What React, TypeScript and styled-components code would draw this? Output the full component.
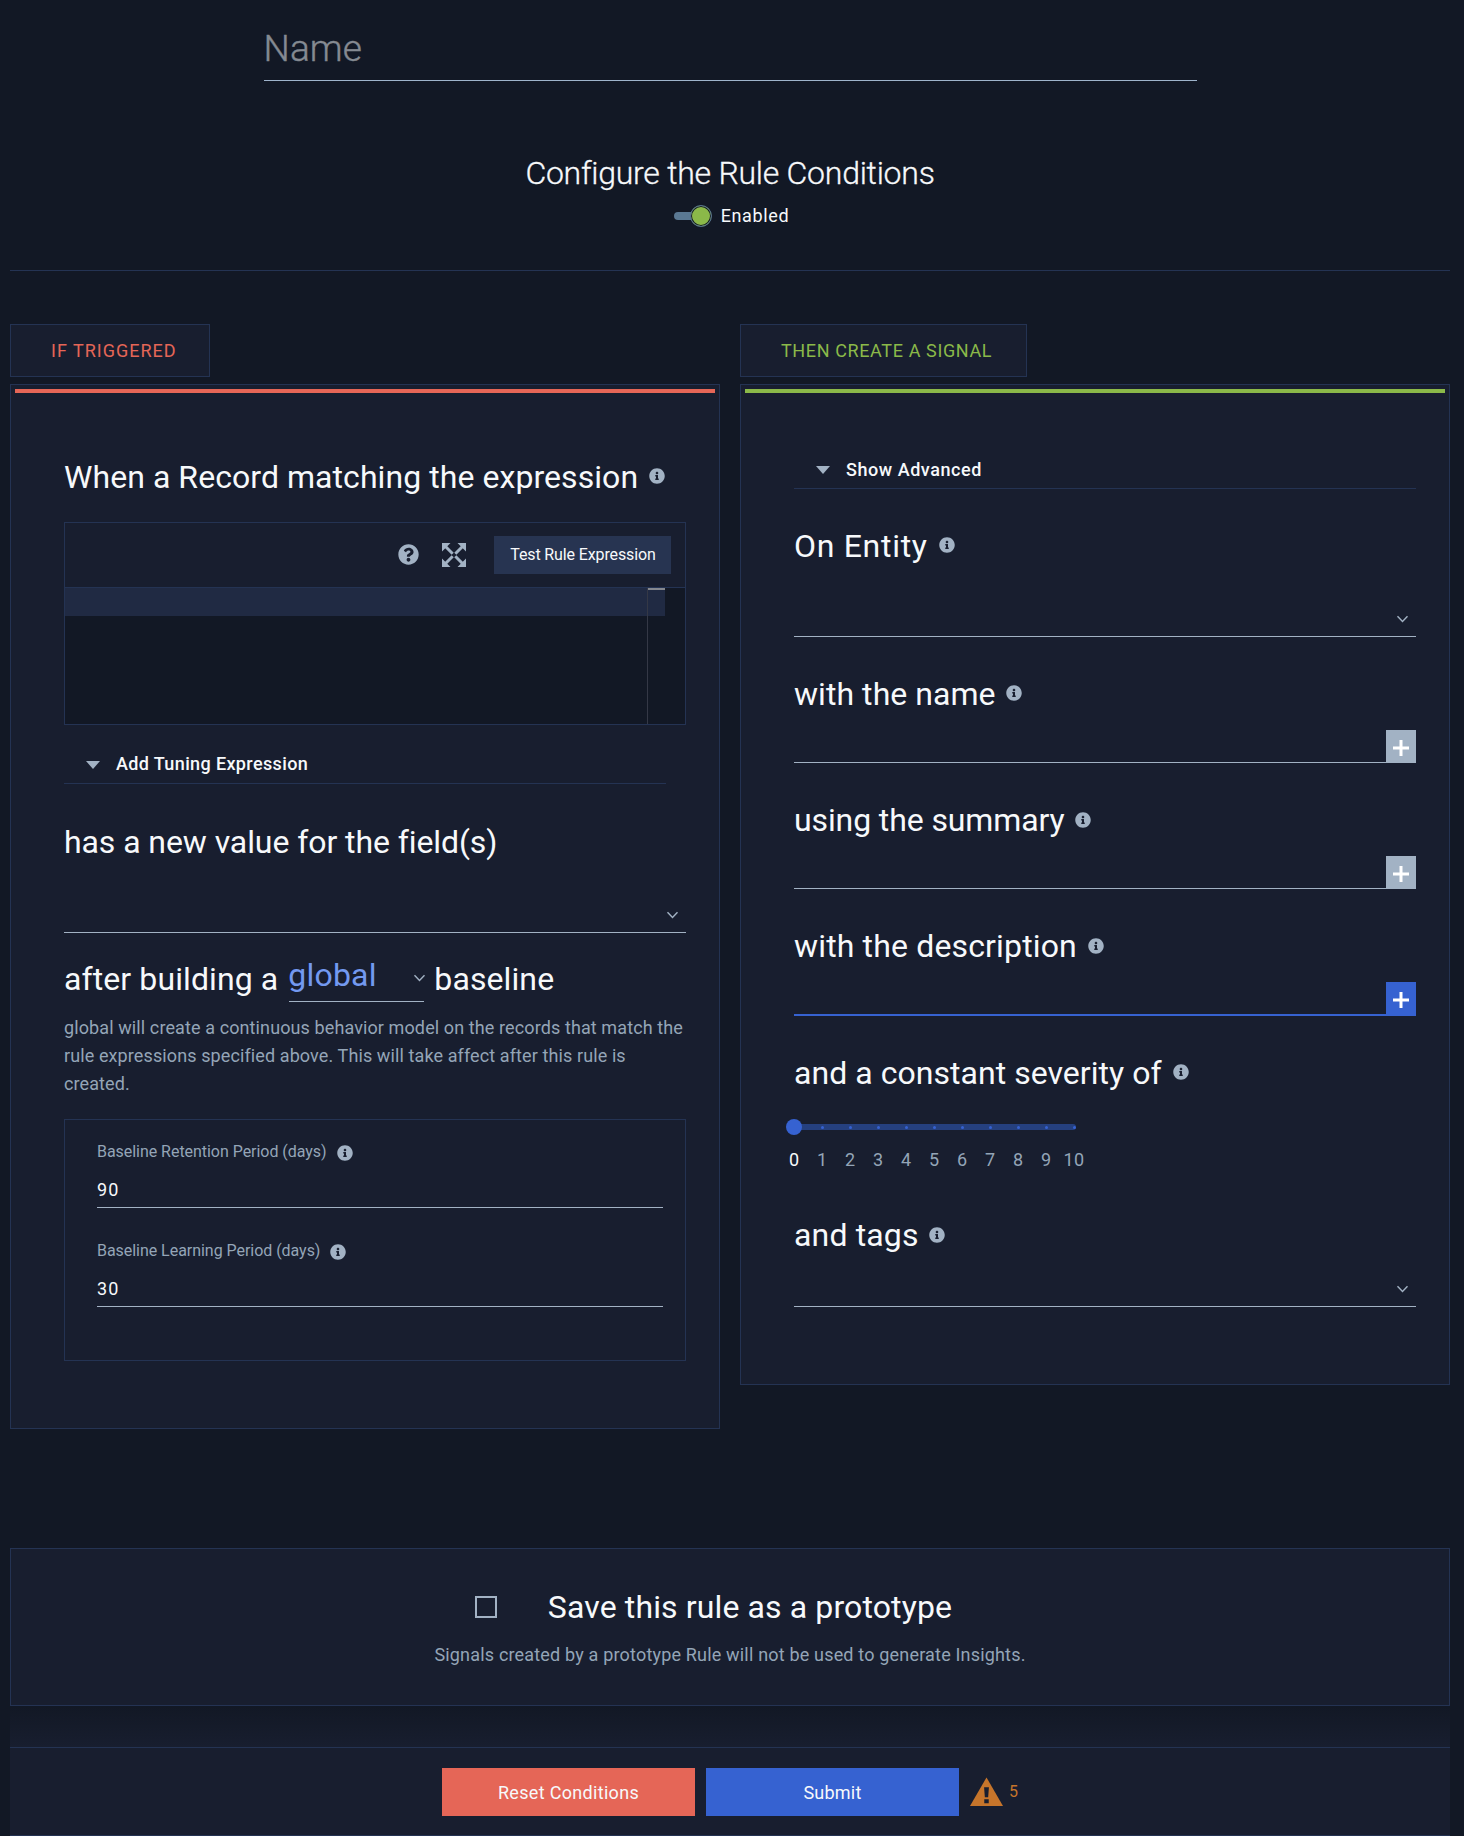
import React from 'react';
import styled, { createGlobalStyle, css } from 'styled-components';
import { FaInfoCircle, FaQuestionCircle } from 'react-icons/fa';

const c = {
  page: '#121825',
  panel: '#181e2f',
  border: '#243353',
  muted: '#a2b2c4',
  text: '#f7f9fb',
  red: '#e56657',
  green: '#8bb949',
  blue: '#3662d1',
  link: '#7399f0',
  orange: '#c6752b',
};

const GlobalStyle = createGlobalStyle`
  *, *::before, *::after { box-sizing: border-box; }
  body {
    margin: 0;
    background: ${c.page};
    color: ${c.text};
    font-family: Roboto, "Liberation Sans", sans-serif;
    font-size: 18px;
  }
`;

const Page = styled.main`
  display: flex;
  flex-direction: column;
  height: 1836px;
  padding: 17px 14px 0 10px;
  overflow: hidden;
`;

const NameField = styled.div`
  width: 933px;
  margin: 0 auto;
  border-bottom: 1px solid #9fb4cc;
  color: #858a92;
  font-size: 37px;
  font-weight: 300;
  line-height: 63px;
  letter-spacing: 0.1px;
  -webkit-text-stroke: 0.4px currentColor;
`;

const Title = styled.h1`
  margin: 73px 0 13px;
  font-size: 32px;
  font-weight: 300;
  line-height: 38px;
  letter-spacing: -0.25px;
  text-align: center;
  -webkit-text-stroke: 0.3px currentColor;
`;

const ToggleRow = styled.div`
  display: flex;
  align-items: center;
  justify-content: center;
  height: 22px;
  padding-left: 3px;
  line-height: 20px;
  letter-spacing: 0.65px;
`;

const ToggleLabel = styled.span`
  padding-bottom: 1px;
`;

const ToggleTrack = styled.div`
  display: flex;
  align-items: center;
  width: 37px;
  margin-right: 10px;

  &::before {
    content: '';
    flex: none;
    width: 20px;
    height: 8px;
    margin-right: -4px;
    border-radius: 4px 0 0 4px;
    background: #5a7893;
  }
`;

const ToggleKnob = styled.div`
  flex: none;
  width: 22px;
  height: 22px;
  border: 1px solid #54708f;
  border-radius: 50%;
  background: ${c.green};
  box-shadow: inset 0 0 0 1px ${c.page};
`;

const Divider = styled.hr`
  width: 100%;
  height: 1px;
  margin: 43px 0 53px;
  border: 0;
  background: ${c.border};
`;

const Columns = styled.div`
  display: grid;
  grid-template-columns: 710px 710px;
  gap: 20px;
  align-items: start;
`;

const Tab = styled.div<{ $color: string; $width: number; $ls: number }>`
  width: ${p => p.$width}px;
  height: 53px;
  margin-bottom: 7px;
  padding-left: 40px;
  border: 1px solid ${c.border};
  background: ${c.panel};
  color: ${p => p.$color};
  font-weight: 400;
  line-height: 51px;
  letter-spacing: ${p => p.$ls}px;
`;

const Panel = styled.section<{ $accent: string; $bottom: number }>`
  padding: 4px 4px ${p => p.$bottom}px;
  border: 1px solid ${c.border};
  background: ${c.panel};

  &::before {
    content: '';
    display: block;
    height: 4px;
    background: ${p => p.$accent};
  }
`;

const PanelBody = styled.div<{ $top: number }>`
  padding: ${p => p.$top}px 29px 0 49px;
`;

const headingText = css<{ $ls?: number }>`
  font-size: 32px;
  font-weight: 400;
  line-height: 38px;
  letter-spacing: ${p => p.$ls ?? 0.1}px;
  white-space: nowrap;
`;

const Heading = styled.h2<{ $ls?: number; $top?: number; $gap?: number; $lift?: number }>`
  ${headingText}
  display: flex;
  align-items: center;
  margin: ${p => p.$top ?? 38}px 0 0;

  svg {
    flex: none;
    margin: 0 0 ${p => p.$lift ?? 2}px ${p => p.$gap ?? 11}px;
  }
`;

const Info = styled(FaInfoCircle)`
  width: 16px;
  height: 16px;
  color: ${c.muted};
`;

const Editor = styled.div`
  margin-top: 26px;
  border: 1px solid ${c.border};
`;

const EditorToolbar = styled.div`
  display: flex;
  align-items: center;
  justify-content: flex-end;
  height: 65px;
  padding-right: 14px;
  border-bottom: 1px solid ${c.border};
  color: ${c.muted};
`;

const HelpIcon = styled(FaQuestionCircle)`
  width: 21px;
  height: 21px;
  margin: 0 23px 1px 0;
`;

const TestButton = styled.button`
  width: 177px;
  height: 38px;
  margin: 0 0 0 28px;
  padding: 0 0 2px 1px;
  border: 0;
  background: #273451;
  color: ${c.text};
  font: 400 16px Roboto, sans-serif;
  letter-spacing: -0.12px;
`;

const CodeArea = styled.div`
  display: flex;
  height: 136px;
  background: ${c.page};
`;

const ActiveLine = styled.div`
  width: 582px;
  height: 28px;
  background: #202a43;
`;

const Ruler = styled.div`
  width: 18px;
  border-left: 1px solid #343846;

  &::before {
    content: '';
    display: block;
    height: 28px;
    border-top: 2px solid #85888f;
    background: #202a43;
  }
`;

const Expander = styled.div<{ $width: number; $height: number; $top: number; $ls: number }>`
  display: flex;
  align-items: center;
  gap: 16px;
  width: ${p => p.$width}px;
  height: ${p => p.$height}px;
  margin-top: ${p => p.$top}px;
  padding: 0 0 1px 22px;
  border-bottom: 1px solid ${c.border};
  font-weight: 500;
  letter-spacing: ${p => p.$ls}px;

  &::before {
    content: '';
    margin-top: 2px;
    border: solid transparent;
    border-width: 8px 7px 0;
    border-top-color: ${c.muted};
  }
`;

const Select = styled.div<{ $top: number }>`
  display: flex;
  align-items: center;
  justify-content: flex-end;
  height: 36px;
  margin-top: ${p => p.$top}px;
  padding: 0 8px 0 0;
  border-bottom: 1px solid ${c.muted};
`;

const Sentence = styled.div`
  ${headingText}
  display: flex;
  height: 42px;
  margin-top: 27px;
`;

const InlineSelect = styled.div`
  display: flex;
  justify-content: space-between;
  width: 135px;
  height: 42px;
  margin: 0 10px 0 11px;
  border-bottom: 1px solid ${c.muted};
  color: ${c.link};
  line-height: 30px;
  letter-spacing: 0.2px;
  text-indent: -1px;

  svg { margin: 14px -1px 0 0; }
`;

const Hint = styled.p`
  margin: 12px 0 21px;
  color: #94a5b7;
  line-height: 28px;
  letter-spacing: 0.105px;
  white-space: nowrap;
`;

const PeriodBox = styled.div`
  height: 242px;
  padding: 20px 22px 0 32px;
  border: 1px solid ${c.border};
`;

const PeriodLabel = styled.div`
  display: flex;
  align-items: center;
  height: 22px;
  color: #94a5b7;
  font-size: 16px;
  letter-spacing: -0.04px;

  svg { margin: 3px 0 0 10px; }
`;

const PeriodValue = styled.div`
  height: 35px;
  margin: 11px 0 32px;
  border-bottom: 1px solid ${c.muted};
  line-height: 34px;
  letter-spacing: 1.2px;

  & + div { margin-top: -1px; }
`;

const AddField = styled.div<{ $focused?: boolean }>`
  display: flex;
  justify-content: flex-end;
  height: ${p => (p.$focused ? 34 : 33)}px;
  margin-top: 17px;
  background: linear-gradient(${p => (p.$focused ? c.blue : c.muted)} 0 0) bottom / 100% ${p => (p.$focused ? 2 : 1)}px no-repeat;
`;

const AddButton = styled.button<{ $focused?: boolean }>`
  display: grid;
  place-items: center;
  width: 30px;
  height: 100%;
  padding: 2px 0 0;
  border: 0;
  background: ${p => (p.$focused ? c.blue : c.muted)};
`;

const Slider = styled.div`
  width: 282px;
  padding-top: 32px;
`;

const SliderTrack = styled.div`
  display: flex;
  align-items: center;
  justify-content: space-between;
  height: 6px;
  margin-bottom: 20px;
  border-radius: 3px;
  background: #25407f;
`;

const Dot = styled.span<{ $thumb: boolean }>`
  flex: none;
  width: ${p => (p.$thumb ? 16 : 3)}px;
  height: ${p => (p.$thumb ? 16 : 3)}px;
  margin-left: ${p => (p.$thumb ? -8 : 0)}px;
  margin-right: ${p => (p.$thumb ? -6.5 : 0)}px;
  border-radius: 50%;
  background: ${c.blue};
`;

const SliderLabels = styled.div`
  display: grid;
  grid-template-columns: repeat(11, 28px);
  margin-left: -14px;
  color: #94a5b7;
  line-height: 20px;
  text-align: center;

  span:first-child { color: ${c.text}; }
  span:last-child { letter-spacing: 0.5px; }
`;

const Prototype = styled.section`
  flex: none;
  height: 158px;
  margin-top: 119px;
  padding-top: 39px;
  border: 1px solid ${c.border};
  background: ${c.panel};
  text-align: center;
`;

const PrototypeRow = styled.label`
  ${headingText}
  display: flex;
  align-items: center;
  justify-content: center;
  gap: 51px;
  padding-right: 33px;
`;

const Checkbox = styled.span`
  width: 22px;
  height: 22px;
  border: 2px solid ${c.muted};
`;

const PrototypeNote = styled.p`
  margin: 17px 0 0;
  color: #94a5b7;
  line-height: 24px;
  letter-spacing: 0.18px;
`;

const Fade = styled.div`
  flex: none;
  height: 41px;
  background: linear-gradient(${c.page}, ${c.panel});
`;

const Footer = styled.footer`
  display: flex;
  flex: none;
  justify-content: center;
  gap: 11px;
  height: 89px;
  padding-top: 20px;
  border: solid ${c.border};
  border-width: 1px 0;
  background: ${c.panel};
`;

const ActionButton = styled.button<{ $bg: string; $ls: number }>`
  width: 253px;
  height: 48px;
  padding: 0;
  border: 0;
  background: ${p => p.$bg};
  color: ${c.text};
  font: 400 18px Roboto, sans-serif;
  letter-spacing: ${p => p.$ls}px;
`;

const Warnings = styled.div`
  display: flex;
  gap: 6px;
  width: 48px;
  padding-top: 9px;
  color: ${c.orange};
  font-size: 16px;
  line-height: 29px;
`;

const Chevron = () => (
  <svg width="12" height="8" viewBox="0 0 12 8" fill="none" stroke={c.muted} strokeWidth="1.4">
    <path d="M1.500 1.200 6.500 6.400 11.500 1.200" />
  </svg>
);

const ExpandIcon = () => (
  <svg width="24" height="24" viewBox="0 0 24 24" fill="currentColor" stroke="currentColor">
    <path stroke="none" d="M0 0H8.5L0 8.5ZM24 0V8.5L15.500 0ZM0 24V15.500L8.500 24ZM24 24H15.500L24 15.500Z" />
    <path strokeWidth="3" d="M3 3 10.700 10.700M21 3 13.300 10.700M3 21 10.700 13.300M21 21 13.300 13.300" />
  </svg>
);

const PlusIcon = () => (
  <svg width="16" height="16" viewBox="0 0 16 16" fill="#fff">
    <path d="M6.500 0h3v6.500H16v3H9.500V16h-3V9.500H0v-3h6.500z" />
  </svg>
);

const WarningIcon = () => (
  <svg width="34" height="30" viewBox="0 0 34 30">
    <path fill={c.orange} d="M17 0 34 29.500H0Z" />
    <path fill={c.panel} d="M14.500 10h5l-.8 10.500h-3.400zM14.700 22.500h4.600v4h-4.600z" />
  </svg>
);

type InfoHeadingProps = { text: string; ls: number; top?: number; gap?: number; lift?: number };

const HeadingWithInfo = ({ text, ls, top, gap, lift }: InfoHeadingProps) => (
  <Heading $ls={ls} $top={top} $gap={gap} $lift={lift}>{text}<Info /></Heading>
);

const Period = ({ label, value }: { label: string; value: number }) => (
  <>
    <PeriodLabel>{label}<Info /></PeriodLabel>
    <PeriodValue>{value}</PeriodValue>
  </>
);

const TemplateField = ({ focused }: { focused?: boolean }) => (
  <AddField $focused={focused}>
    <AddButton $focused={focused}><PlusIcon /></AddButton>
  </AddField>
);

const severities = Array.from({ length: 11 }, (_, i) => i);

export default function App() {
  return (
    <>
      <GlobalStyle />
      <Page>
        <NameField>Name</NameField>
        <Title>Configure the Rule Conditions</Title>
        <ToggleRow>
          <ToggleTrack><ToggleKnob /></ToggleTrack>
          <ToggleLabel>Enabled</ToggleLabel>
        </ToggleRow>
        <Divider />

        <Columns>
          <div>
            <Tab $color={c.red} $width={200} $ls={1}>IF TRIGGERED</Tab>
            <Panel $accent={c.red} $bottom={67}>
              <PanelBody $top={65}>
                <HeadingWithInfo text="When a Record matching the expression" ls={0.06} top={0} />
                <Editor>
                  <EditorToolbar>
                    <HelpIcon />
                    <ExpandIcon />
                    <TestButton>Test Rule Expression</TestButton>
                  </EditorToolbar>
                  <CodeArea>
                    <ActiveLine />
                    <Ruler />
                  </CodeArea>
                </Editor>
                <Expander $width={602} $height={39} $top={20} $ls={0.37}>Add Tuning Expression</Expander>
                <Heading $ls={-0.08} $top={39}>has a new value for the field(s)</Heading>
                <Select $top={36}><Chevron /></Select>
                <Sentence>
                  after building a
                  <InlineSelect>global<Chevron /></InlineSelect>
                  baseline
                </Sentence>
                <Hint>
                  global will create a continuous behavior model on the records that match the<br />
                  rule expressions specified above. This will take affect after this rule is<br />
                  created.
                </Hint>
                <PeriodBox>
                  <Period label="Baseline Retention Period (days)" value={90} />
                  <Period label="Baseline Learning Period (days)" value={30} />
                </PeriodBox>
              </PanelBody>
            </Panel>
          </div>

          <div>
            <Tab $color={c.green} $width={287} $ls={0.62}>THEN CREATE A SIGNAL</Tab>
            <Panel $accent={c.green} $bottom={77}>
              <PanelBody $top={58}>
                <Expander $width={622} $height={38} $top={0} $ls={0.55}>Show Advanced</Expander>
                <HeadingWithInfo text="On Entity" ls={0.7} />
                <Select $top={36}><Chevron /></Select>
                <HeadingWithInfo text="with the name" ls={0.05} gap={10} />
                <TemplateField />
                <HeadingWithInfo text="using the summary" ls={-0.11} gap={10} lift={0} />
                <TemplateField />
                <HeadingWithInfo text="with the description" ls={0.15} lift={0} />
                <TemplateField focused />
                <HeadingWithInfo text="and a constant severity of" ls={0.04} />
                <Slider>
                  <SliderTrack>
                    {severities.map(n => <Dot key={n} $thumb={n === 0} />)}
                  </SliderTrack>
                  <SliderLabels>
                    {severities.map(n => <span key={n}>{n}</span>)}
                  </SliderLabels>
                </Slider>
                <HeadingWithInfo text="and tags" ls={0.15} top={46} gap={10} lift={0} />
                <Select $top={17}><Chevron /></Select>
              </PanelBody>
            </Panel>
          </div>
        </Columns>

        <Prototype>
          <PrototypeRow $ls={0.12}>
            <Checkbox />
            Save this rule as a prototype
          </PrototypeRow>
          <PrototypeNote>Signals created by a prototype Rule will not be used to generate Insights.</PrototypeNote>
        </Prototype>
        <Fade />
        <Footer>
          <ActionButton $bg={c.red} $ls={0.32}>Reset Conditions</ActionButton>
          <ActionButton $bg={c.blue} $ls={0.22}>Submit</ActionButton>
          <Warnings><WarningIcon />5</Warnings>
        </Footer>
      </Page>
    </>
  );
}
